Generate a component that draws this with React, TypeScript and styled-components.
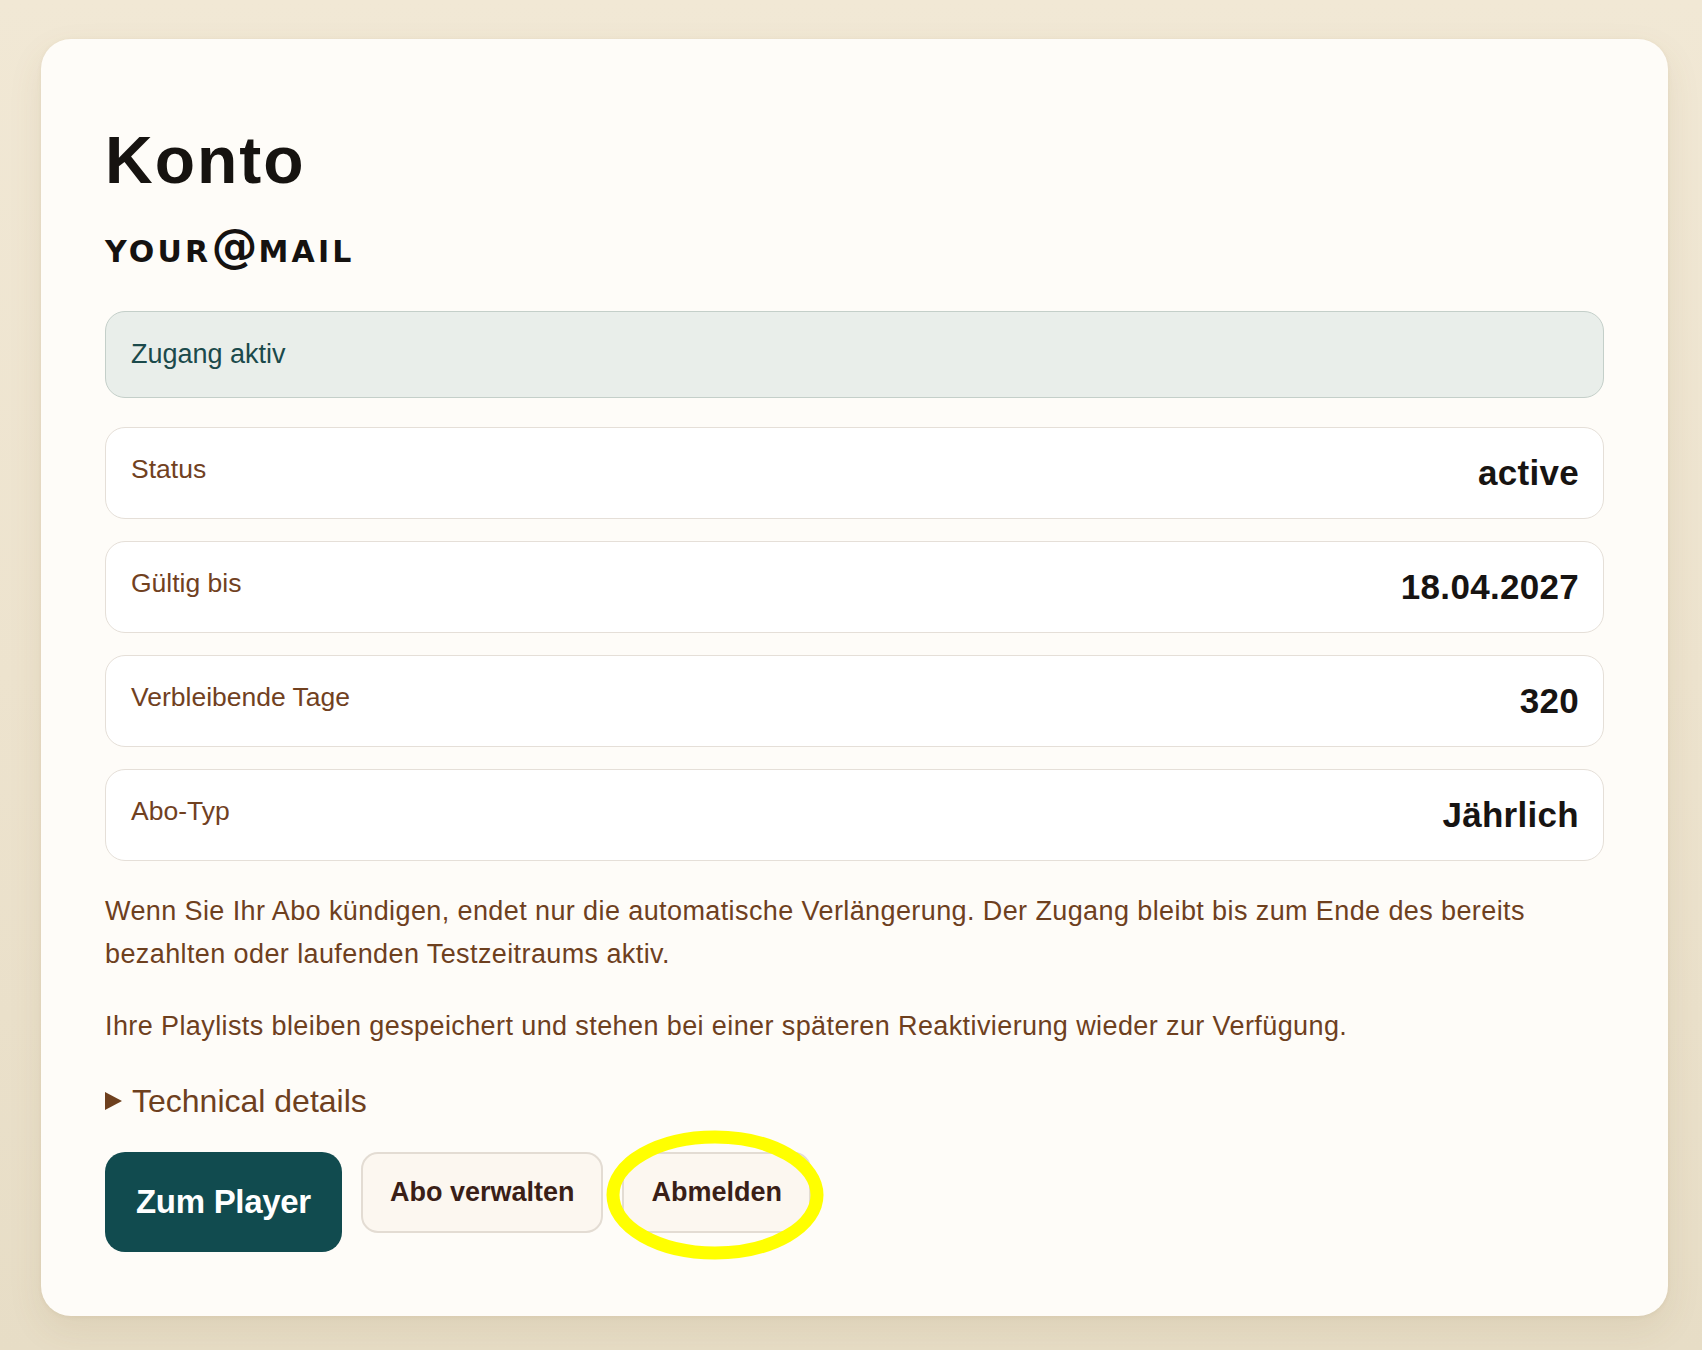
import React from 'react';
import styled, { createGlobalStyle } from 'styled-components';

const GlobalStyle = createGlobalStyle`
  html, body { margin: 0; padding: 0; }
  body {
    min-height: 1350px;
    background: linear-gradient(180deg, #F1E8D5 0%, #EDE3CE 50%, #E7DDC6 100%);
    font-family: "Liberation Sans", Arial, sans-serif;
  }
  * { box-sizing: border-box; }
`;

const Page = styled.div`
  padding: 39px 34px 33px 41px;
`;

const Card = styled.main`
  background: #FEFCF8;
  border-radius: 30px;
  padding: 85px 64px 64px 64px;
  box-shadow: 0 14px 34px rgba(130, 100, 50, 0.10), 0 1px 4px rgba(130, 100, 50, 0.08);
`;

const Title = styled.h1`
  margin: 0;
  font-family: "Liberation Sans", Arial, sans-serif;
  font-size: 66px;
  line-height: 72px;
  font-weight: 700;
  letter-spacing: 2px;
  color: #161310;
`;

const Email = styled.h2`
  margin: 26px 0 0;
  font-family: "DejaVu Sans", "Liberation Sans", sans-serif;
  font-size: 30px;
  line-height: 48px;
  font-weight: 700;
  letter-spacing: 3.2px;
  color: #151210;
  text-transform: uppercase;
`;

const At = styled.span`
  font-size: 46px;
  font-weight: 700;
  letter-spacing: 1px;
`;

const Notice = styled.div`
  margin-top: 35px;
  height: 87px;
  display: flex;
  align-items: center;
  padding: 0 25px;
  background: #E9EEEA;
  border: 1.5px solid #C4CFC9;
  border-radius: 20px;
  font-size: 27px;
  color: #1B4A4B;
`;

const Rows = styled.div`
  margin-top: 29px;
  display: flex;
  flex-direction: column;
  gap: 22px;
`;

const Row = styled.div`
  height: 92px;
  display: flex;
  align-items: center;
  justify-content: space-between;
  padding: 0 24px 0 25px;
  background: #FFFFFF;
  border: 1.5px solid #E5DFD8;
  border-radius: 20px;
`;

const Label = styled.span`
  font-size: 26.5px;
  color: #71411F;
  padding-bottom: 8px;
`;

const Value = styled.span`
  font-size: 35px;
  font-weight: 700;
  letter-spacing: 0.3px;
  color: #171412;
`;

const Paragraph = styled.p`
  margin: 29px 0 0;
  font-size: 27px;
  line-height: 43px;
  letter-spacing: 0.4px;
  color: #6E401E;
  & + & { margin-top: 29px; }
`;

const Details = styled.details`
  margin-top: 33px;
`;

const Summary = styled.summary`
  list-style: none;
  display: flex;
  align-items: center;
  gap: 10px;
  font-size: 32px;
  line-height: 40px;
  color: #6E401E;
  cursor: pointer;
  &::-webkit-details-marker { display: none; }
`;

const Triangle = styled.span`
  width: 0;
  height: 0;
  border-left: 17px solid #6E401E;
  border-top: 9px solid transparent;
  border-bottom: 9px solid transparent;
`;

const Actions = styled.div`
  margin-top: 31px;
  display: flex;
  align-items: flex-start;
  gap: 19px;
`;

const PrimaryButton = styled.button`
  height: 100px;
  padding: 0 31px;
  border: none;
  border-radius: 20px;
  background: #114B4F;
  color: #FFFFFF;
  font-family: "Liberation Sans", Arial, sans-serif;
  font-size: 33px;
  font-weight: 700;
  letter-spacing: -0.3px;
  cursor: pointer;
`;

const SecondaryButton = styled.button`
  height: 81px;
  padding: 0 27px;
  border: 2px solid #E3DCD3;
  border-radius: 17px;
  background: #FCF7F0;
  color: #3A1F17;
  font-family: "Liberation Sans", Arial, sans-serif;
  font-size: 27px;
  font-weight: 700;
  cursor: pointer;
`;

const Highlighted = styled.div`
  position: relative;
`;

const Ring = styled.svg`
  position: absolute;
  left: -16px;
  top: -22px;
  width: 218px;
  height: 130px;
  pointer-events: none;
  overflow: visible;
`;

const rows: { label: string; value: string }[] = [
  { label: 'Status', value: 'active' },
  { label: 'Gültig bis', value: '18.04.2027' },
  { label: 'Verbleibende Tage', value: '320' },
  { label: 'Abo-Typ', value: 'Jährlich' },
];

export default function App() {
  return (
    <>
      <GlobalStyle />
      <Page>
        <Card>
          <Title>Konto</Title>
          <Email>
            YOUR<At>@</At>MAIL
          </Email>
          <Notice>Zugang aktiv</Notice>
          <Rows>
            {rows.map((r) => (
              <Row key={r.label}>
                <Label>{r.label}</Label>
                <Value>{r.value}</Value>
              </Row>
            ))}
          </Rows>
          <Paragraph>
            Wenn Sie Ihr Abo kündigen, endet nur die automatische Verlängerung. Der Zugang bleibt bis zum Ende des bereits
            bezahlten oder laufenden Testzeitraums aktiv.
          </Paragraph>
          <Paragraph>
            Ihre Playlists bleiben gespeichert und stehen bei einer späteren Reaktivierung wieder zur Verfügung.
          </Paragraph>
          <Details>
            <Summary>
              <Triangle />
              Technical details
            </Summary>
          </Details>
          <Actions>
            <PrimaryButton>Zum Player</PrimaryButton>
            <SecondaryButton>Abo verwalten</SecondaryButton>
            <Highlighted>
              <SecondaryButton>Abmelden</SecondaryButton>
              <Ring viewBox="0 0 218 130">
                <ellipse cx="109" cy="65" rx="102" ry="58" fill="none" stroke="#FFFF00" strokeWidth="13" />
              </Ring>
            </Highlighted>
          </Actions>
        </Card>
      </Page>
    </>
  );
}
